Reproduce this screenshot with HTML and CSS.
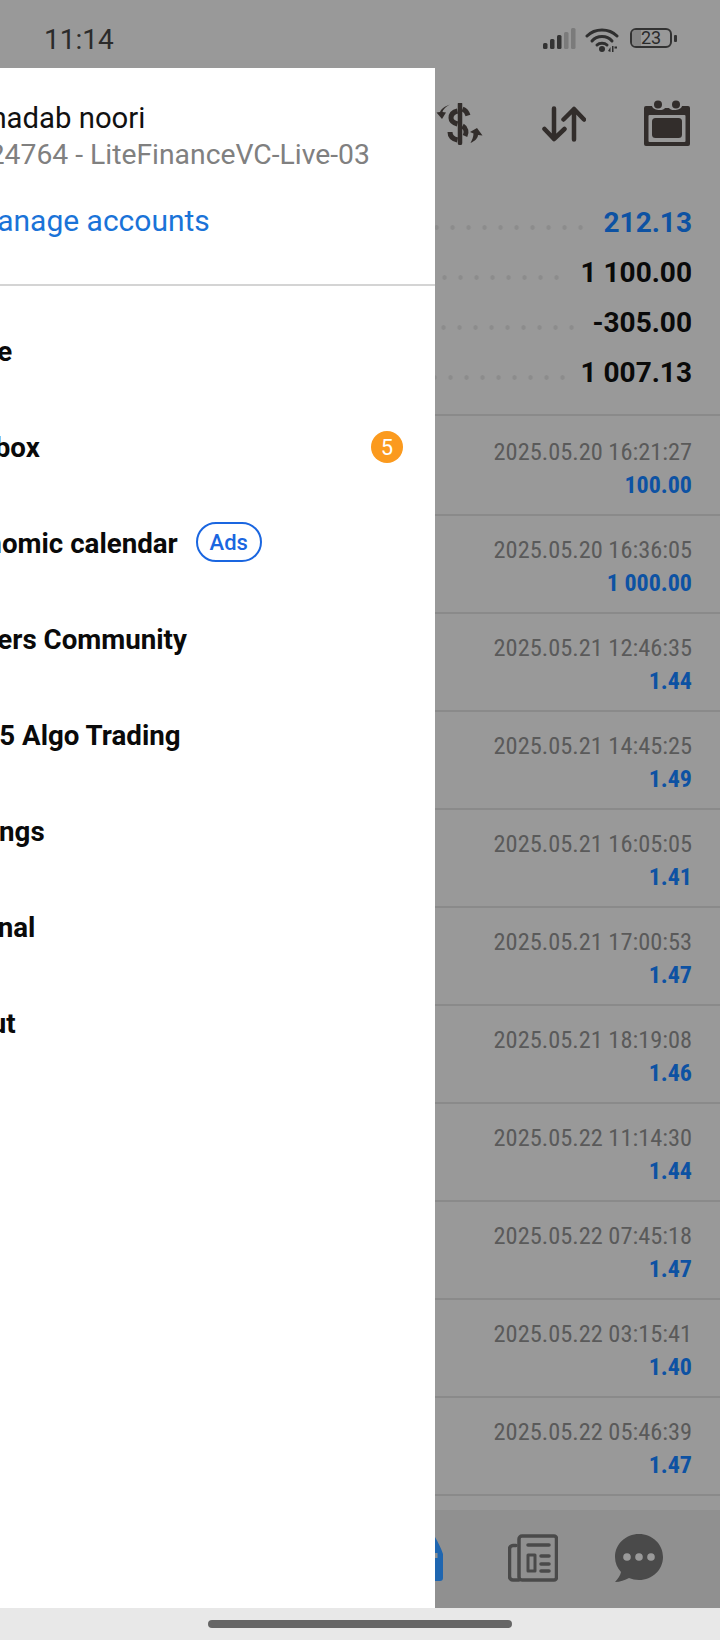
FILE: index.html
```html
<!DOCTYPE html>
<html lang="en">
<head>
<meta charset="utf-8">
<title>Accounts drawer</title>
<link rel="stylesheet" href="styles.css">
</head>
<body>
<div class="phone">
  <header class="status">
    <span class="time">11:14</span>
    <div class="status-icons">
      <svg class="i-signal" width="33" height="22" viewBox="0 0 33 22"><g fill="#333"><rect x="0" y="15" width="4.500" height="6" rx="1.500"/><rect x="7" y="11" width="4.500" height="10" rx="1.500"/><rect x="14" y="7" width="4.500" height="14" rx="1.500"/></g><g fill="#7b7b7b"><rect x="21" y="4" width="4.500" height="17" rx="1.500"/><rect x="28" y="0" width="4.500" height="21" rx="1.500"/></g></svg>
      <svg class="i-wifi" width="34" height="26" viewBox="0 0 34 26"><g fill="none" stroke="#2f2f2f" stroke-width="3" stroke-linecap="round"><path d="M2 9C10 1 24 1 32 9"/><path d="M7 14C12 8 22 8 27 14"/><path d="M12 18C14.500 15.500 19.500 15.500 22 18"/></g><circle cx="17" cy="22" r="3" fill="#2f2f2f"/><path d="M23 24l2.500-4v5zM27 19h1.500v6H27zM29.500 19.500h2.500v2h-2.500z" fill="#2f2f2f"/></svg>
      <div class="battery"><div class="cell"><span class="level"></span><span class="pct">23</span></div><span class="nub"></span></div>
    </div>
  </header>

  <nav class="toolbar">
    <svg width="48" height="42" viewBox="0 0 48 42"><g fill="none" stroke="#322d2b" stroke-linecap="butt"><path d="M24 1V40" stroke-width="4.500" stroke-linecap="round"/><path d="M26.500 6C29 7 31 9 32 12.500" stroke-width="5"/><path d="M21.500 8C17 9 15 12 15 15C15 18 18 20 21.500 21" stroke-width="5"/><path d="M26.500 23C30 25 31 29 29 33" stroke-width="5"/><path d="M14 29C14 33 17 36 21.500 37" stroke-width="5"/></g><path d="M14 1.500C9 4 7 7 6.500 9L10 9.500L6 16L0.500 9.500L4 9C5 6 9 3 14 1.500Z" fill="#322d2b"/><path d="M34.500 40C39 38 42 35 42 32L46.500 32.500L41 25L34 29L37.500 30.500C37.500 34 36 37 34.500 40Z" fill="#322d2b"/></svg>
    <svg width="44" height="36" viewBox="0 0 44 36"><g fill="none" stroke="#322d2b" stroke-width="4.500" stroke-linecap="round" stroke-linejoin="round"><path d="M12 2.500V33M2.500 23L12 33L22.500 23"/><path d="M32 33.500V3M21.500 13.500L32 3L42 13.500"/></g></svg>
    <svg width="46" height="46" viewBox="0 0 46 46"><g fill="#322d2b"><circle cx="14" cy="4.500" r="4"/><circle cx="32" cy="4.500" r="4"/><path d="M2 6H8C9 11 20 11 21 8H25C26 11 37 11 38 6H44A2 2 0 0 1 46 8V44A2 2 0 0 1 44 46H2A2 2 0 0 1 0 44V8A2 2 0 0 1 2 6Z"/></g><rect x="4.500" y="15" width="37" height="27" rx="1" fill="#999"/><rect x="8" y="18" width="30" height="20" rx="3.500" fill="#322d2b"/></svg>
  </nav>

  <section class="summary">
    <div class="sum-row"><span class="dots"></span><span class="amount amount-blue">212.13</span></div>
    <div class="sum-row"><span class="dots"></span><span class="amount">1 100.00</span></div>
    <div class="sum-row"><span class="dots"></span><span class="amount">-305.00</span></div>
    <div class="sum-row"><span class="dots"></span><span class="amount">1 007.13</span></div>
  </section>

  <section class="list">
    <div class="row"><span class="date">2025.05.20 16:21:27</span><span class="val">100.00</span></div>
    <div class="row"><span class="date">2025.05.20 16:36:05</span><span class="val">1 000.00</span></div>
    <div class="row"><span class="date">2025.05.21 12:46:35</span><span class="val">1.44</span></div>
    <div class="row"><span class="date">2025.05.21 14:45:25</span><span class="val">1.49</span></div>
    <div class="row"><span class="date">2025.05.21 16:05:05</span><span class="val">1.41</span></div>
    <div class="row"><span class="date">2025.05.21 17:00:53</span><span class="val">1.47</span></div>
    <div class="row"><span class="date">2025.05.21 18:19:08</span><span class="val">1.46</span></div>
    <div class="row"><span class="date">2025.05.22 11:14:30</span><span class="val">1.44</span></div>
    <div class="row"><span class="date">2025.05.22 07:45:18</span><span class="val">1.47</span></div>
    <div class="row"><span class="date">2025.05.22 03:15:41</span><span class="val">1.40</span></div>
    <div class="row"><span class="date">2025.05.22 05:46:39</span><span class="val">1.47</span></div>
    <div class="row row-last"></div>
  </section>

  <footer class="tabbar">
    <svg class="tab-history" width="30" height="48" viewBox="0 0 30 48"><path d="M15 3C18 8 21 14 23 20V44A3 3 0 0 1 20 47H0V0H15Z" fill="#1f66b0"/><path d="M15 19H17.500V24H15Z" fill="#909090"/></svg>
    <svg class="tab-news" width="50" height="48" viewBox="0 0 50 48"><g fill="none" stroke="#4a4a4a" stroke-width="3.500" stroke-linejoin="round" stroke-linecap="round"><path d="M14 2H46A2.500 2.500 0 0 1 48.500 4.500V43.500A2.500 2.500 0 0 1 46 46H14A3 3 0 0 1 11 43V5A3 3 0 0 1 14 2Z"/><path d="M11 46H5A3.500 3.500 0 0 1 1.500 42.500V15A3.500 3.500 0 0 1 5 11.500H8"/><path d="M20 11H41M33 22H41M33 30H41M33 37H41"/><rect x="20" y="21" width="7" height="16" stroke-width="3"/></g></svg>
    <svg class="tab-chat" width="48" height="48" viewBox="0 0 48 48"><path d="M24 0C37.300 0 48 10.200 48 23C48 35.800 37.300 46 24 46C20.500 46 17 45.300 14 44C10 46 5 48 0 48C3 45 5.500 41 6 38C2.300 34 0 29 0 23C0 10.200 10.700 0 24 0Z" fill="#4a4a4a"/><circle cx="12" cy="23" r="3.800" fill="#9a9a9a"/><circle cx="24" cy="23" r="3.800" fill="#9a9a9a"/><circle cx="36" cy="23" r="3.800" fill="#9a9a9a"/></svg>
  </footer>

  <div class="navbar"><span class="home"></span></div>

  <aside class="drawer">
    <div class="drawer-body">
      <div class="profile">
        <div class="name">Shahadab noori</div>
        <div class="account">90224764 - LiteFinanceVC-Live-03</div>
        <div class="manage">Manage accounts</div>
      </div>
    </div>
    <div class="rule"></div>
    <div class="drawer-body">
      <ul class="menu">
        <li class="item"><span>Trade</span></li>
        <li class="item"><span>Mailbox</span><span class="badge">5</span></li>
        <li class="item"><span>Economic calendar</span><span class="ads">Ads</span></li>
        <li class="item"><span>Traders Community</span></li>
        <li class="item"><span>MQL5 Algo Trading</span></li>
        <li class="item"><span>Settings</span></li>
        <li class="item"><span>Journal</span></li>
        <li class="item"><span>About</span></li>
      </ul>
    </div>
  </aside>
</div>
</body>
</html>
```
FILE: styles.css
```css
* { box-sizing: border-box; }
html, body { margin: 0; padding: 0; }
body { font-family: Roboto, "Noto Sans", sans-serif; background: #999; }

.phone {
  position: relative;
  width: 720px;
  height: 1640px;
  overflow: hidden;
  display: flex;
  flex-direction: column;
  background: #999;
}

/* status bar */
.status {
  height: 68px;
  flex: none;
  display: flex;
  align-items: flex-start;
  justify-content: space-between;
  padding: 23px 43px 0 44px;
}
.time { font-size: 28px; line-height: 34px; color: #2b2b2b; font-stretch: 90%; }
.status-icons { display: flex; align-items: flex-start; padding-top: 4px; gap: 9px; }
.i-signal { margin-top: 1px; }
.battery { display: flex; align-items: center; height: 20px; margin: 1px 0 0 2px; }
.cell {
  position: relative;
  width: 42px;
  height: 20px;
  border: 2px solid #333;
  border-radius: 6px;
  display: flex;
  align-items: center;
  justify-content: center;
  overflow: hidden;
}
.level { position: absolute; left: 0; top: 0; bottom: 0; width: 9px; background: #858585; }
.pct { position: relative; font-size: 18px; line-height: 16px; color: #2b2b2b; }
.nub { width: 3px; height: 7px; margin-left: 2px; background: #333; border-radius: 1px; }

/* toolbar */
.toolbar {
  height: 129px;
  flex: none;
  display: flex;
  align-items: flex-start;
  padding: 32px 30px 0 436px;
}
.toolbar svg:nth-child(1) { margin-top: 3px; }
.toolbar svg:nth-child(2) { margin: 6px 0 0 58px; }
.toolbar svg:nth-child(3) { margin-left: 58px; }

/* summary */
.summary { flex: none; height: 217px; padding-top: 1px; }
.sum-row { height: 50px; display: flex; align-items: center; padding-right: 28px; }
.dots {
  flex: 1;
  height: 5px;
  margin: 9px 15px 0 0;
  background-image: radial-gradient(circle at center, #8c8c8c 2px, transparent 2.6px);
  background-size: 16px 5px;
  background-position: right center;
  background-repeat: repeat-x;
}
.sum-row:nth-child(2) .dots { margin-right: 16px; }
.sum-row:nth-child(3) .dots { margin-right: 13px; }
.sum-row:nth-child(4) .dots { margin-right: 10px; }
.amount { font-size: 28px; font-weight: 700; line-height: 32px; color: #0a0a0a; white-space: nowrap; }
.amount-blue { color: #0d52a3; }

/* list */
.list { flex: 1; overflow: hidden; }
.row {
  height: 98px;
  border-top: 2px solid #8a8a8a;
  padding: 17px 28px 0 0;
  display: flex;
  flex-direction: column;
  align-items: flex-end;
  font-stretch: 75%;
}
.row:first-child { height: 100px; padding-top: 18.5px; }
.row-last { height: 20px; }
.date { font-size: 24.4px; line-height: 33px; color: #5a5a5a; white-space: nowrap; }
.val { font-size: 24px; line-height: 34px; font-weight: 700; color: #0d52a3; white-space: nowrap; }

/* bottom tabs */
.tabbar {
  position: relative;
  height: 98px;
  flex: none;
  background: #909090;
  display: flex;
  align-items: flex-start;
  padding: 24px 0 0 420px;
}
.tab-news { margin-left: 58px; }
.tab-chat { margin-left: 57px; }

.navbar {
  height: 32px;
  flex: none;
  background: #e8e8e8;
  display: flex;
  justify-content: center;
  padding-top: 12px;
  position: relative;
  z-index: 2;
}
.home { width: 304px; height: 8px; border-radius: 4px; background: #666; }

/* drawer */
.drawer {
  position: absolute;
  left: 0;
  top: 68px;
  width: 435px;
  height: 1540px;
  background: #fff;
  overflow: hidden;
}
.drawer-body { margin-left: -59px; padding-right: 32px; }
.profile { height: 216px; padding-top: 31px; }
.name { font-size: 29.3px; line-height: 38px; color: #111; white-space: nowrap; }
.account { font-size: 28.3px; line-height: 36px; color: #808080; white-space: nowrap; }
.manage { font-size: 30px; line-height: 36px; margin: 30px 0 0 30px; color: #1a73d8; white-space: nowrap; }
.rule { height: 2px; background: #d4d4d4; }
.menu { list-style: none; margin: 0; padding: 17px 0 0; }
.item {
  height: 96px;
  display: flex;
  align-items: center;
  font-size: 27.7px;
  font-weight: 700;
  color: #0a0a0a;
  white-space: nowrap;
}
.badge {
  width: 32px;
  height: 32px;
  margin-left: auto;
  border-radius: 50%;
  background: #fb9a1e;
  color: #fff;
  font-size: 22px;
  font-weight: 400;
  display: flex;
  align-items: center;
  justify-content: center;
}
.ads {
  width: 66px;
  height: 40px;
  margin: -2px 0 0 18px;
  border: 2px solid #1a66e0;
  border-radius: 20px;
  color: #1a66e0;
  font-size: 22px;
  font-weight: 500;
  display: flex;
  align-items: center;
  justify-content: center;
}
```
